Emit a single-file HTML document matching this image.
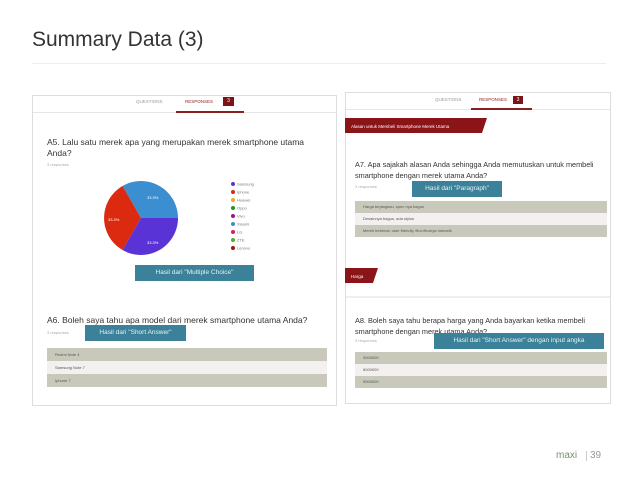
<!DOCTYPE html>
<html><head><meta charset="utf-8"><style>
*{margin:0;padding:0;box-sizing:border-box}
body{width:638px;height:479px;background:#fff;position:relative;overflow:hidden;font-family:"Liberation Sans",sans-serif}
.a{position:absolute}
.btn{position:absolute;background:#3a8199;color:#e8f2f5;font-size:6.5px;text-align:center;line-height:16px;white-space:nowrap}
.row{position:absolute;font-size:4px;color:#555;padding-left:8px}
.g{background:#c8c9bb}.w{background:#f4f0ef}
.q{position:absolute;font-size:8.5px;color:#333;line-height:10.5px;white-space:nowrap}
.r{position:absolute;font-size:4px;color:#aaa}
</style></head><body>
<div class="a" style="left:32px;top:28px;font-size:21px;color:#333">Summary Data (3)</div>
<div class="a" style="left:32px;top:63px;width:574px;height:1px;background:#e8efee"></div>

<div class="a" style="left:32px;top:95px;width:305px;height:311px;border:1px solid #ddd;background:#fff"></div>
<div class="a" style="left:33px;top:112px;width:303px;height:1px;background:#e5e5e5"></div>
<div class="a" style="left:136px;top:99px;font-size:4.5px;color:#999">QUESTIONS</div>
<div class="a" style="left:185px;top:99px;font-size:4.5px;color:#8a1f1f">RESPONSES</div>
<div class="a" style="left:223px;top:97px;width:11px;height:9px;background:#7b1418;color:#fff;font-size:5px;text-align:center;line-height:9px">3</div>
<div class="a" style="left:176px;top:111px;width:68px;height:1.5px;background:#8a1f1f"></div>
<div class="q" style="left:47px;top:137px">A5. Lalu satu merek apa yang merupakan merek smartphone utama<br>Anda?</div>
<div class="r" style="left:47px;top:162px">3 responses</div>
<svg class="a" style="left:0;top:0" width="340" height="260">
<path d="M141,218 L178,218 A37,37 0 0 0 122.5,186 Z" fill="#3b8fd0"/>
<path d="M141,218 L122.5,186 A37,37 0 0 0 122.5,250 Z" fill="#db2a0f"/>
<path d="M141,218 L122.5,250 A37,37 0 0 0 178,218 Z" fill="#5a33d6"/>
<g font-size="4" fill="#fff"><text x="147" y="199">33.3%</text><text x="108" y="221">33.3%</text><text x="147" y="244">33.3%</text></g>
<g font-size="4" fill="#777">
<circle cx="233" cy="184" r="2" fill="#5a33d6"/><text x="237" y="185.5">Samsung</text>
<circle cx="233" cy="192" r="2" fill="#db2a0f"/><text x="237" y="193.5">Iphone</text>
<circle cx="233" cy="200" r="2" fill="#f5a623"/><text x="237" y="201.5">Huawei</text>
<circle cx="233" cy="208" r="2" fill="#1a9a1a"/><text x="237" y="209.5">Oppo</text>
<circle cx="233" cy="216" r="2" fill="#9b119b"/><text x="237" y="217.5">Vivo</text>
<circle cx="233" cy="224" r="2" fill="#3b8fd0"/><text x="237" y="225.5">Xiaomi</text>
<circle cx="233" cy="232" r="2" fill="#d81b6a"/><text x="237" y="233.5">LG</text>
<circle cx="233" cy="240" r="2" fill="#55b02a"/><text x="237" y="241.5">ZTE</text>
<circle cx="233" cy="248" r="2" fill="#a01515"/><text x="237" y="249.5">Lenovo</text>
</g></svg>
<div class="btn" style="left:135px;top:265px;width:119px;height:16px">Hasil dari "Multiple Choice"</div>
<div class="q" style="left:47px;top:315px">A6. Boleh saya tahu apa model dari merek smartphone utama Anda?</div>
<div class="r" style="left:47px;top:330px">3 responses</div>
<div class="btn" style="left:85px;top:325px;width:101px;height:16px">Hasil dari "Short Answer"</div>
<div class="row g" style="left:47px;top:348px;width:280px;height:13px;line-height:13px">Redmi Note 4</div>
<div class="row w" style="left:47px;top:361px;width:280px;height:13px;line-height:13px">Samsung Note 7</div>
<div class="row g" style="left:47px;top:374px;width:280px;height:13px;line-height:13px">Iphone 7</div>

<div class="a" style="left:345px;top:92px;width:266px;height:312px;border:1px solid #ddd;background:#fff"></div>
<div class="a" style="left:346px;top:109px;width:264px;height:1px;background:#e5e5e5"></div>
<div class="a" style="left:435px;top:97px;font-size:4.5px;color:#999">QUESTIONS</div>
<div class="a" style="left:479px;top:97px;font-size:4.5px;color:#8a1f1f">RESPONSES</div>
<div class="a" style="left:513px;top:96px;width:10px;height:8px;background:#7b1418;color:#fff;font-size:5px;text-align:center;line-height:8px">3</div>
<div class="a" style="left:471px;top:108px;width:61px;height:1.5px;background:#8a1f1f"></div>
<svg class="a" style="left:345px;top:117px" width="145" height="170">
<path d="M0,1 H142 L137,16 H0 Z" fill="#8a1418"/>
<path d="M0,151 H33 L28,166 H0 Z" fill="#8a1418"/>
<text x="6" y="11" font-size="4.5" fill="#fff">Alasan untuk Membeli Smartphone Merek Utama</text>
<text x="6" y="161" font-size="4.5" fill="#fff">Harga</text>
</svg>
<div class="q" style="left:355px;top:160px;font-size:7.3px">A7. Apa sajakah alasan Anda sehingga Anda memutuskan untuk membeli<br>smartphone dengan merek utama Anda?</div>
<div class="r" style="left:355px;top:184px">3 responses</div>
<div class="btn" style="left:412px;top:181px;width:90px;height:16px">Hasil dari "Paragraph"</div>
<div class="row g" style="left:355px;top:201px;width:252px;height:12px;line-height:12px">Harga terjangkau, spec nya bagus</div>
<div class="row w" style="left:355px;top:213px;width:252px;height:12px;line-height:12px">Desainnya bagus, ada stylus</div>
<div class="row g" style="left:355px;top:225px;width:252px;height:12px;line-height:12px">Merek terkenal, user friendly, fitur-fiturnya menarik</div>
<div class="a" style="left:346px;top:296px;width:264px;height:2px;background:#eee"></div>
<div class="q" style="left:355px;top:316px;font-size:7.3px">A8. Boleh saya tahu berapa harga yang Anda bayarkan ketika membeli<br>smartphone dengan merek utama Anda?</div>
<div class="r" style="left:355px;top:338px">3 responses</div>
<div class="btn" style="left:434px;top:333px;width:170px;height:16px">Hasil dari "Short Answer" dengan input angka</div>
<div class="row g" style="left:355px;top:352px;width:252px;height:12px;line-height:12px">3000000</div>
<div class="row w" style="left:355px;top:364px;width:252px;height:12px;line-height:12px">6000000</div>
<div class="row g" style="left:355px;top:376px;width:252px;height:12px;line-height:12px">9000000</div>

<div class="a" style="left:556px;top:450px;font-size:10px;color:#7a8f6a">maxi</div>
<div class="a" style="left:586px;top:451px;width:1px;height:10px;background:#ccc"></div>
<div class="a" style="left:590px;top:450px;font-size:10px;color:#999">39</div>
</body></html>
